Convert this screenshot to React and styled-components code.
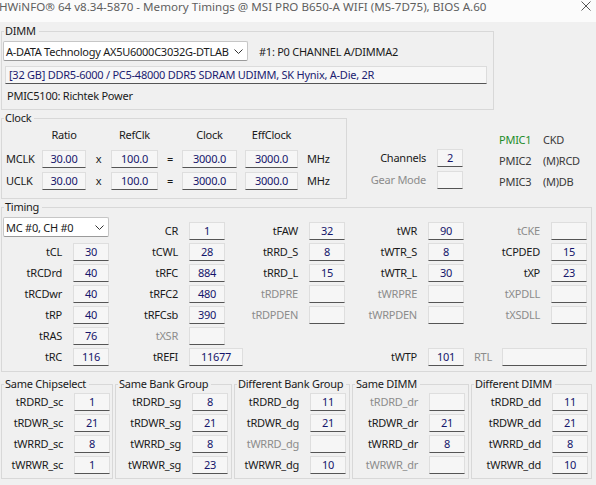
import React from 'react';
import styled, { createGlobalStyle } from 'styled-components';

const GlobalStyle = createGlobalStyle`
  html, body {
    margin: 0;
    padding: 0;
    background: #f0f0f0;
  }
  body {
    font-family: "Noto Sans", "Open Sans", sans-serif;
    font-size: 11px;
    letter-spacing: -0.25px;
    color: #1a1a1a;
  }
`;

const Window = styled.div`
  width: 596px;
  height: 485px;
  overflow: hidden;
  background: #f0f0f0;
`;

const TitleBar = styled.div`
  height: 22px;
  background: #fbfbfb;
  display: flex;
  justify-content: space-between;
  align-items: flex-start;
`;

const TitleText = styled.div`
  font-size: 11.6px;
  letter-spacing: 0;
  line-height: 14px;
  color: #5f5f5f;
  white-space: nowrap;
  margin-left: -1px;
`;

const CloseIcon = styled.svg`
  margin: 1px 5px 0 0;
  flex: none;
`;

const Body = styled.div`
  padding-left: 1px;
`;

const Group = styled.fieldset`
  box-sizing: border-box;
  width: ${p => p.$w}px;
  min-width: 0;
  margin: ${p => p.$mt || 0}px 0 0 0;
  padding: 0;
  border: 1px solid #d8d8d8;
`;

const Legend = styled.legend`
  margin-left: 2px;
  padding: 0 3px 0 1px;
  line-height: 16px;
  font-size: 11px;
  color: #1a1a1a;
  white-space: nowrap;
`;

const Combo = styled.div`
  box-sizing: border-box;
  width: ${p => p.$w}px;
  height: 20px;
  margin-left: 1px;
  background: #ffffff;
  border: 1px solid #c6c6c6;
  border-bottom-color: #9a9a9a;
  border-radius: 2px;
  display: flex;
  align-items: center;
  justify-content: space-between;
  padding: 0 4px 0 2px;
  white-space: nowrap;
  align-self: start;
`;

const DimmInner = styled.div`
  padding: 2px 0 5px 0;
  display: flex;
  flex-direction: column;
`;

const DimmTop = styled.div`
  display: flex;
  align-items: center;
  gap: 11px;
`;

const InfoField = styled.div`
  box-sizing: border-box;
  width: 482px;
  height: 18px;
  margin: 5px 0 0 3px;
  padding-left: 3px;
  background: #f7f7f7;
  border: 1px solid #dcdcdc;
  border-bottom-color: #555;
  color: #1c1c70;
  line-height: 16px;
  white-space: nowrap;
`;

const PlainLine = styled.div`
  margin-top: 4px;
  padding-left: 5px;
  line-height: 16px;
`;

const ClockRow = styled.div`
  display: flex;
  align-items: flex-start;
`;

const ClockGrid = styled.div`
  display: grid;
  grid-template-columns: 40px 44px 25px 47px 24px 55px 8px 53px auto;
  grid-template-rows: 19px 18px 18px;
  row-gap: 4px;
  margin-top: 1px;
  padding-bottom: 8px;
`;

const Header = styled.div`
  line-height: 16px;
  text-align: center;
  white-space: nowrap;
`;

const RowLabel = styled.div`
  line-height: 18px;
  padding-left: ${p => p.$pl || 0}px;
  text-align: ${p => p.$center ? 'center' : 'left'};
  white-space: nowrap;
`;

const Label = styled.div`
  line-height: 18px;
  text-align: right;
  padding-right: 11px;
  white-space: nowrap;
  color: ${p => p.$off ? '#8c8c8c' : '#1a1a1a'};
`;

const Box = styled.div`
  box-sizing: border-box;
  width: ${p => p.$w || 36}px;
  height: 18px;
  background: #f6f6f6;
  border: 1px solid #dedede;
  border-bottom-color: #555555;
  color: #15156b;
  text-align: center;
  line-height: 16px;
  justify-self: start;
  white-space: nowrap;
`;

const Side = styled.div`
  display: flex;
  align-items: flex-start;
`;

const ChannelGrid = styled.div`
  display: grid;
  grid-template-columns: 90px 26px;
  grid-template-rows: 18px 18px;
  row-gap: 4px;
  margin-top: 39px;
`;

const PmicGrid = styled.div`
  display: grid;
  grid-template-columns: 44px auto;
  grid-auto-rows: 21px;
  margin: 19px 0 0 36px;
  line-height: 21px;
  white-space: nowrap;
`;

const PmicName = styled.div`
  color: ${p => p.$active ? '#1e8c2a' : '#3a3a3a'};
`;

const PmicValue = styled.div`
  color: #3a3a3a;
`;

const TimingGrid = styled.div`
  display: grid;
  grid-template-columns: 71px 36px 80px 36px 84px 36px 83px 36px 87px 36px;
  grid-template-rows: 23px repeat(6, 18px);
  row-gap: 3px;
  align-items: end;
  margin-top: 2px;
  padding-bottom: 5px;
`;

const ComboCell = styled.div`
  grid-column: span 2;
  align-self: start;
  display: flex;
`;

const RtlCell = styled.div`
  grid-column: span 2;
  display: flex;
  align-items: center;
  gap: 10px;
  padding-left: 10px;
  color: #8c8c8c;
  line-height: 18px;
`;

const RtlBox = styled(Box)`
  flex: 1;
`;

const BottomRow = styled.div`
  display: flex;
  gap: 2px;
  margin-top: 4px;
`;

const PairGrid = styled.div`
  display: grid;
  grid-template-columns: 1fr 36px;
  grid-auto-rows: 18px;
  row-gap: 3px;
  padding: 1px ${p => p.$pr}px 4px 0;
`;

const Chevron = () => (
  <svg width="9" height="5" viewBox="0 0 9 5">
    <polyline points="0.5,0.5 4.5,4.5 8.5,0.5" fill="none" stroke="#333" strokeWidth="1" />
  </svg>
);

const timingRows = [
  ['combo', { l: 'CR', v: '1' }, { l: 'tFAW', v: '32' }, { l: 'tWR', v: '90' }, { l: 'tCKE', off: true }],
  [{ l: 'tCL', v: '30' }, { l: 'tCWL', v: '28' }, { l: 'tRRD_S', v: '8' }, { l: 'tWTR_S', v: '8' }, { l: 'tCPDED', v: '15' }],
  [{ l: 'tRCDrd', v: '40' }, { l: 'tRFC', v: '884' }, { l: 'tRRD_L', v: '15' }, { l: 'tWTR_L', v: '30' }, { l: 'tXP', v: '23' }],
  [{ l: 'tRCDwr', v: '40' }, { l: 'tRFC2', v: '480' }, { l: 'tRDPRE', off: true }, { l: 'tWRPRE', off: true }, { l: 'tXPDLL', off: true }],
  [{ l: 'tRP', v: '40' }, { l: 'tRFCsb', v: '390' }, { l: 'tRDPDEN', off: true }, { l: 'tWRPDEN', off: true }, { l: 'tXSDLL', off: true }],
  [{ l: 'tRAS', v: '76' }, { l: 'tXSR', off: true }, null, null, null],
  [{ l: 'tRC', v: '116' }, { l: 'tREFI', v: '11677', w: 54 }, null, { l: 'tWTP', v: '101' }, 'rtl'],
];

const groups = [
  { name: 'Same Chipselect', w: 112, pr: 2, rows: [['tRDRD_sc', '1'], ['tRDWR_sc', '21'], ['tWRRD_sc', '8'], ['tWRWR_sc', '1']] },
  { name: 'Same Bank Group', w: 117, pr: 3, rows: [['tRDRD_sg', '8'], ['tRDWR_sg', '21'], ['tWRRD_sg', '8'], ['tWRWR_sg', '23']] },
  { name: 'Different Bank Group', w: 116, pr: 3, rows: [['tRDRD_dg', '11'], ['tRDWR_dg', '21'], ['tWRRD_dg', null], ['tWRWR_dg', '10']] },
  { name: 'Same DIMM', w: 117, pr: 3, rows: [['tRDRD_dr', null], ['tRDWR_dr', '21'], ['tWRRD_dr', '8'], ['tWRWR_dr', null]] },
  { name: 'Different DIMM', w: 121, pr: 3, rows: [['tRDRD_dd', '11'], ['tRDWR_dd', '21'], ['tWRRD_dd', '8'], ['tWRWR_dd', '10']] },
];

function TimingCell({ item }) {
  if (item === 'combo') {
    return (
      <ComboCell>
        <Combo $w={136}>
          <span>MC #0, CH #0</span>
          <Chevron />
        </Combo>
      </ComboCell>
    );
  }
  if (item === 'rtl') {
    return (
      <RtlCell>
        <span>RTL</span>
        <RtlBox />
      </RtlCell>
    );
  }
  if (!item) {
    return (
      <>
        <span />
        <span />
      </>
    );
  }
  return (
    <>
      <Label $off={item.off}>{item.l}</Label>
      <Box $w={item.w}>{item.v || ''}</Box>
    </>
  );
}

export default function App() {
  return (
    <Window>
      <GlobalStyle />
      <TitleBar>
        <TitleText>HWiNFO® 64 v8.34-5870 - Memory Timings @ MSI PRO B650-A WIFI (MS-7D75), BIOS A.60</TitleText>
        <CloseIcon width="10" height="10" viewBox="0 0 10 10">
          <path d="M0.5 0.5 L9.5 9.5 M9.5 0.5 L0.5 9.5" stroke="#555" strokeWidth="1" fill="none" />
        </CloseIcon>
      </TitleBar>
      <Body>
        <Group $w={493} $mt={1}>
          <Legend>DIMM</Legend>
          <DimmInner>
            <DimmTop>
              <Combo $w={245}>
                <span>A-DATA Technology AX5U6000C3032G-DTLAB</span>
                <Chevron />
              </Combo>
              <span>#1: P0 CHANNEL A/DIMMA2</span>
            </DimmTop>
            <InfoField>[32 GB] DDR5-6000 / PC5-48000 DDR5 SDRAM UDIMM, SK Hynix, A-Die, 2R</InfoField>
            <PlainLine>PMIC5100: Richtek Power</PlainLine>
          </DimmInner>
        </Group>

        <ClockRow>
          <Group $w={346}>
            <Legend>Clock</Legend>
            <ClockGrid>
              <span />
              <Header>Ratio</Header>
              <span />
              <Header>RefClk</Header>
              <span />
              <Header>Clock</Header>
              <span />
              <Header>EffClock</Header>
              <span />
              {['MCLK', 'UCLK'].map(name => (
                <React.Fragment key={name}>
                  <RowLabel $pl={4}>{name}</RowLabel>
                  <Box $w={44}>30.00</Box>
                  <RowLabel $center>x</RowLabel>
                  <Box $w={47}>100.0</Box>
                  <RowLabel $center>=</RowLabel>
                  <Box $w={55}>3000.0</Box>
                  <span />
                  <Box $w={53}>3000.0</Box>
                  <RowLabel $pl={9}>MHz</RowLabel>
                </React.Fragment>
              ))}
            </ClockGrid>
          </Group>
          <Side>
            <ChannelGrid>
              <Label>Channels</Label>
              <Box $w={26}>2</Box>
              <Label $off>Gear Mode</Label>
              <Box $w={26} />
            </ChannelGrid>
            <PmicGrid>
              <PmicName $active>PMIC1</PmicName>
              <PmicValue>CKD</PmicValue>
              <PmicName>PMIC2</PmicName>
              <PmicValue>(M)RCD</PmicValue>
              <PmicName>PMIC3</PmicName>
              <PmicValue>(M)DB</PmicValue>
            </PmicGrid>
          </Side>
        </ClockRow>

        <Group $w={591}>
          <Legend>Timing</Legend>
          <TimingGrid>
            {timingRows.map((row, r) =>
              row.map((item, c) => <TimingCell key={`${r}-${c}`} item={item} />)
            )}
          </TimingGrid>
        </Group>

        <BottomRow>
          {groups.map(g => (
            <Group key={g.name} $w={g.w}>
              <Legend>{g.name}</Legend>
              <PairGrid $pr={g.pr}>
                {g.rows.map(([l, v]) => (
                  <React.Fragment key={l}>
                    <Label $off={v === null}>{l}</Label>
                    <Box>{v || ''}</Box>
                  </React.Fragment>
                ))}
              </PairGrid>
            </Group>
          ))}
        </BottomRow>
      </Body>
    </Window>
  );
}
